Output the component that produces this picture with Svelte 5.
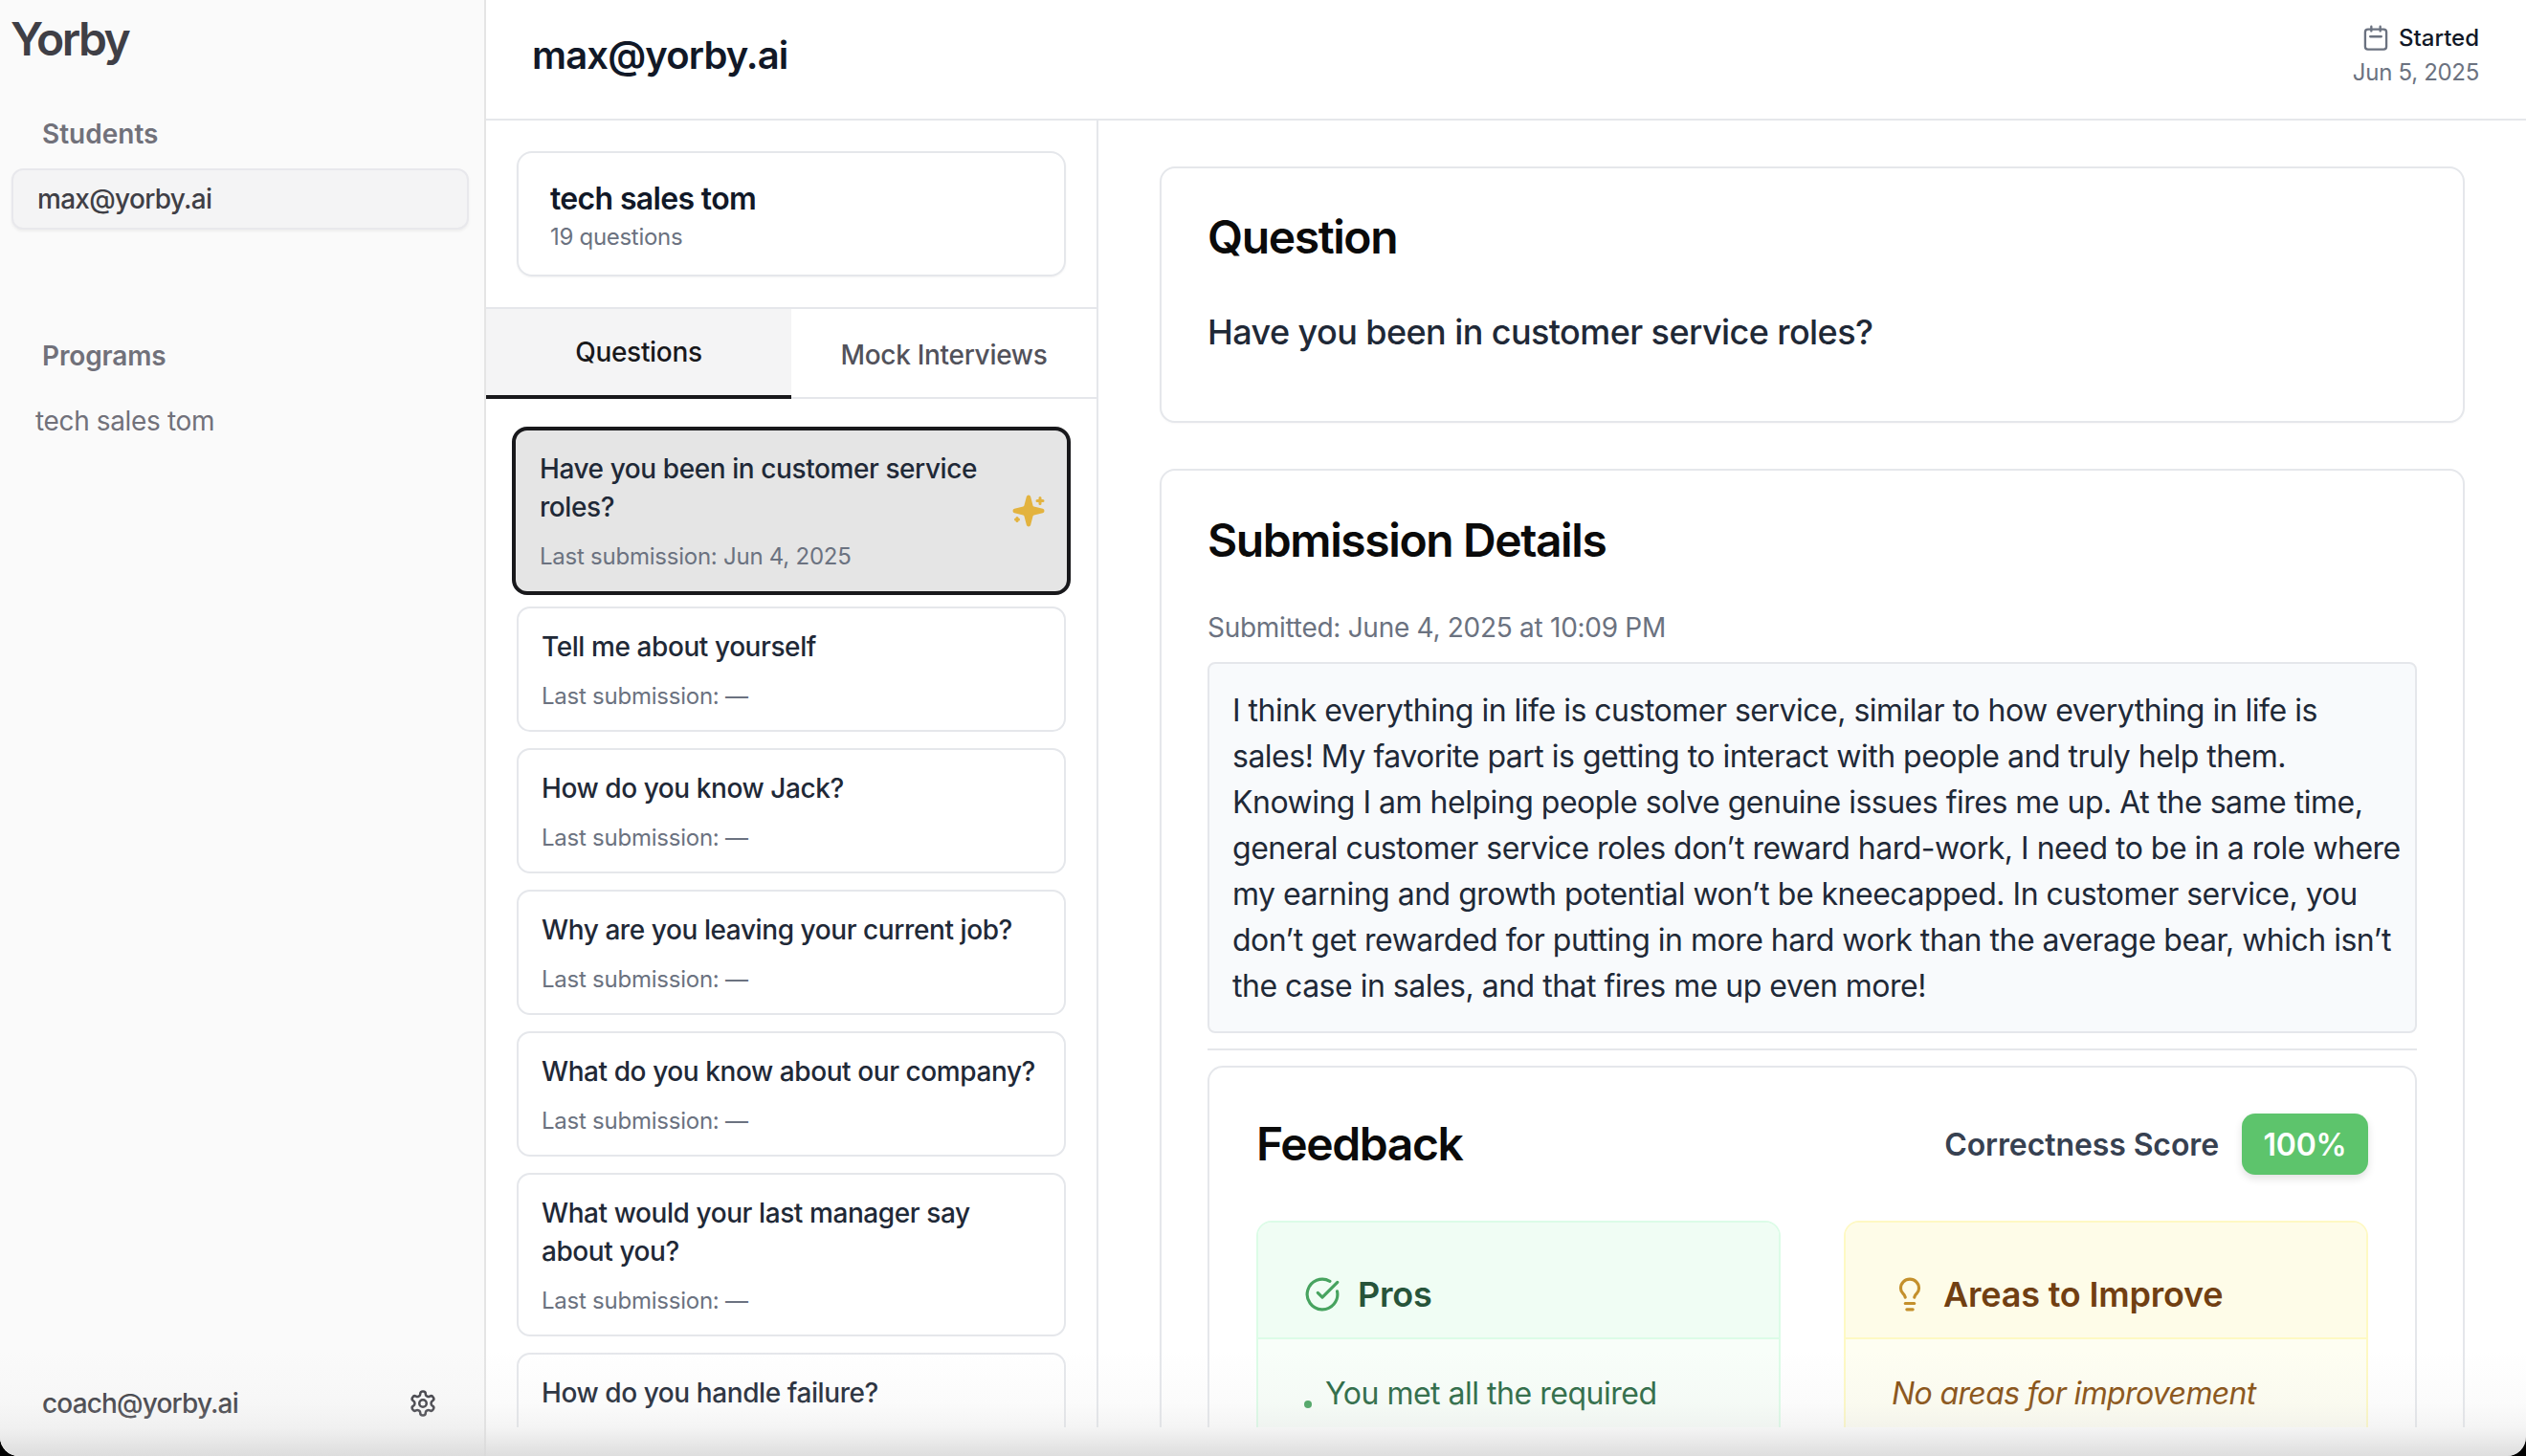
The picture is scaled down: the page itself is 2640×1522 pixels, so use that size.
<script>
  let questions = [
    { text: 'Have you been in customer service roles?', last: 'Jun 4, 2025', active: true },
    { text: 'Tell me about yourself', last: '—' },
    { text: 'How do you know Jack?', last: '—' },
    { text: 'Why are you leaving your current job?', last: '—' },
    { text: 'What do you know about our company?', last: '—' },
    { text: 'What would your last manager say about you?', last: '—' },
    { text: 'How do you handle failure?', last: '—' }
  ];

  // broken by hand so the lines fall where the original's do
  let answerLines = [
    'I think everything in life is customer service, similar to how everything in life is',
    'sales! My favorite part is getting to interact with people and truly help them.',
    'Knowing I am helping people solve genuine issues fires me up. At the same time,',
    'general customer service roles don’t reward hard-work, I need to be in a role where',
    'my earning and growth potential won’t be kneecapped. In customer service, you',
    'don’t get rewarded for putting in more hard work than the average bear, which isn’t',
    'the case in sales, and that fires me up even more!'
  ];
</script>

<div class="app">
  <aside class="sidebar">
    <div class="logo">Yorby</div>
    <h3 class="navTitle">Students</h3>
    <div class="navActive">max@yorby.ai</div>
    <h3 class="navTitle programs">Programs</h3>
    <div class="navItem">tech sales tom</div>
    <div class="account">
      <span>coach@yorby.ai</span>
      <svg class="gear" viewBox="0 0 24 24">
        <path d="M12.22 2h-.44a2 2 0 0 0-2 2v.18a2 2 0 0 1-1 1.73l-.43.25a2 2 0 0 1-2 0l-.15-.08a2 2 0 0 0-2.73.73l-.22.38a2 2 0 0 0 .73 2.73l.15.1a2 2 0 0 1 1 1.72v.51a2 2 0 0 1-1 1.74l-.15.09a2 2 0 0 0-.73 2.73l.22.38a2 2 0 0 0 2.73.73l.15-.08a2 2 0 0 1 2 0l.43.25a2 2 0 0 1 1 1.73V20a2 2 0 0 0 2 2h.44a2 2 0 0 0 2-2v-.18a2 2 0 0 1 1-1.73l.43-.25a2 2 0 0 1 2 0l.15.08a2 2 0 0 0 2.73-.73l.22-.39a2 2 0 0 0-.73-2.73l-.15-.08a2 2 0 0 1-1-1.74v-.5a2 2 0 0 1 1-1.74l.15-.09a2 2 0 0 0 .73-2.73l-.22-.38a2 2 0 0 0-2.73-.73l-.15.08a2 2 0 0 1-2 0l-.43-.25a2 2 0 0 1-1-1.73V4a2 2 0 0 0-2-2z" />
        <circle cx="12" cy="12" r="3" />
      </svg>
    </div>
  </aside>

  <div class="main">
    <header class="header">
      <h1>max@yorby.ai</h1>
      <div class="started">
        <div class="startedLabel">
          <svg class="calendar" viewBox="0 0 24 24">
            <rect x="2.5" y="4" width="19" height="18" rx="2.5" />
            <path d="M8 1.5v4M16 1.5v4M7 10.5h10" />
          </svg>
          Started
        </div>
        <div class="startedDate">Jun 5, 2025</div>
      </div>
    </header>

    <div class="body">
      <section class="listPane">
        <div class="programWrap">
          <div class="programCard">
            <div class="programName">tech sales tom</div>
            <div class="programCount">19 questions</div>
          </div>
        </div>
        <div class="tabs">
          <button class="tab tabActive">Questions</button>
          <button class="tab tabOther">Mock Interviews</button>
        </div>
        <div class="list">
          {#each questions as q}
            <div class={'qCard' + (q.active ? ' qActive' : '')}>
              <div class="qText">
                <p class="qTitle">{q.text}</p>
                <p class="qLast">Last submission: {q.last}</p>
              </div>
              {#if q.active}
                <svg class="sparkle" viewBox="0 0 24 24">
                  <path d="M9.937 15.5A2 2 0 0 0 8.5 14.063l-6.135-1.582a.5.5 0 0 1 0-.962L8.5 9.936A2 2 0 0 0 9.937 8.5l1.582-6.135a.5.5 0 0 1 .963 0L14.063 8.5A2 2 0 0 0 15.5 9.937l6.135 1.581a.5.5 0 0 1 0 .964L15.5 14.063a2 2 0 0 0-1.437 1.437l-1.582 6.135a.5.5 0 0 1-.963 0z" />
                  <path d="M20 3v4M22 5h-4M4 17v2M5 18H3" />
                </svg>
              {/if}
            </div>
          {/each}
        </div>
      </section>

      <section class="detailPane">
        <div class="card questionCard">
          <h2>Question</h2>
          <p class="questionText">Have you been in customer service roles?</p>
        </div>

        <div class="card submissionCard">
          <h2>Submission Details</h2>
          <p class="submitted">Submitted: June 4, 2025 at 10:09 PM</p>
          <div class="answer">
            {#each answerLines as line}
              <div>{line}</div>
            {/each}
          </div>
          <div class="divider"></div>

          <div class="feedback">
            <div class="feedbackHead">
              <h2>Feedback</h2>
              <div class="score">
                <span class="scoreLabel">Correctness Score</span>
                <span class="scoreBadge">100%</span>
              </div>
            </div>
            <div class="columns">
              <div class="col pros">
                <div class="colHead">
                  <svg class="colIcon" viewBox="0 0 24 24">
                    <path d="M21.801 10A10 10 0 1 1 17 3.335" />
                    <path d="m9 11 3 3L22 4" />
                  </svg>
                  <span>Pros</span>
                </div>
                <div class="colBody">
                  <div class="bullet">
                    <i></i>
                    <span>You met all the required elements of the question</span>
                  </div>
                </div>
              </div>
              <div class="col cons">
                <div class="colHead">
                  <svg class="colIcon" viewBox="0 0 24 24">
                    <path d="M15 14c.2-1 .7-1.7 1.5-2.5 1-.9 1.5-2.2 1.5-3.5A6 6 0 0 0 6 8c0 1 .2 2.2 1.5 3.5.7.7 1.3 1.5 1.5 2.5" />
                    <path d="M9 18h6M10 22h4" />
                  </svg>
                  <span>Areas to Improve</span>
                </div>
                <div class="colBody">
                  <em>No areas for improvement identified</em>
                </div>
              </div>
            </div>
          </div>
        </div>
      </section>
    </div>
  </div>

  <div class="bottomFade"></div>
</div>

<style>
  :global(body) {
    margin: 0;
    background: #000;
  }

  * {
    box-sizing: border-box;
  }

  h1,
  h2,
  h3,
  p {
    margin: 0;
  }

  svg {
    fill: none;
    stroke: currentColor;
    stroke-width: 2;
    stroke-linecap: round;
    stroke-linejoin: round;
    flex-shrink: 0;
  }

  .app {
    position: relative;
    display: flex;
    height: 1522px;
    overflow: hidden;
    background: #fff;
    border-radius: 0 0 20px 20px;
    font-family: Inter, 'Liberation Sans', sans-serif;
  }

  .sidebar {
    position: relative;
    display: flex;
    flex-direction: column;
    width: 508px;
    flex-shrink: 0;
    background: #fafafa;
    border-right: 2px solid #e5e5e5;
  }

  .logo {
    margin: 12px 0 0 11px;
    font-size: 48px;
    line-height: 58px;
    font-weight: 600;
    letter-spacing: -2.5px;
    color: #3f3f46;
  }

  .navTitle {
    margin: 50px 0 0 44px;
    font-size: 28px;
    line-height: 40px;
    font-weight: 600;
    color: #71717a;
  }

  .programs {
    margin-top: 112px;
    letter-spacing: -0.15px;
  }

  .navActive {
    margin: 16px 16px 0 12px;
    height: 64px;
    padding-left: 25px;
    display: flex;
    align-items: center;
    font-size: 28px;
    font-weight: 500;
    letter-spacing: -0.7px;
    color: #3f3f46;
    background: #f4f4f5;
    border: 2px solid #e8e8ec;
    border-radius: 12px;
    box-shadow: 0 2px 3px rgba(0, 0, 0, 0.05);
  }

  .navItem {
    margin: 28px 0 0 37px;
    font-size: 28px;
    line-height: 40px;
    letter-spacing: -0.36px;
    color: #71717a;
  }

  .account {
    margin-top: auto;
    display: flex;
    align-items: center;
    justify-content: space-between;
    padding: 0 49px 35px 44px;
    font-size: 28px;
    line-height: 40px;
    font-weight: 500;
    letter-spacing: -0.84px;
    color: #3f3f46;
  }

  .gear {
    width: 30px;
    height: 30px;
  }

  .main {
    flex: 1;
    display: flex;
    flex-direction: column;
    min-width: 0;
  }

  .header {
    height: 126px;
    flex-shrink: 0;
    display: flex;
    align-items: center;
    justify-content: space-between;
    padding: 0 49px 0 48px;
    border-bottom: 2px solid #e5e7eb;
  }

  h1 {
    margin-top: -10px;
    font-size: 40px;
    font-weight: 600;
    letter-spacing: -0.85px;
    color: #111827;
  }

  .started {
    text-align: right;
    margin-top: -8px;
  }

  .startedLabel {
    display: flex;
    align-items: center;
    justify-content: flex-end;
    gap: 10px;
    font-size: 24px;
    line-height: 30px;
    font-weight: 500;
    color: #111827;
  }

  .calendar {
    width: 28px;
    height: 28px;
    color: #6b7280;
  }

  .startedDate {
    margin-top: 6px;
    font-size: 24px;
    line-height: 30px;
    letter-spacing: -0.3px;
    color: #6b7280;
  }

  .body {
    flex: none;
    display: flex;
    height: 1366px;
  }

  .listPane {
    width: 640px;
    flex-shrink: 0;
    display: flex;
    flex-direction: column;
    border-right: 2px solid #e5e7eb;
    overflow: hidden;
  }

  .programWrap {
    padding: 32px 32px 32px;
    border-bottom: 2px solid #e5e7eb;
  }

  .programCard {
    height: 131px;
    padding: 28px 33px 0;
    border: 2px solid #e5e7eb;
    border-radius: 16px;
    box-shadow: 0 1px 2px rgba(0, 0, 0, 0.05);
  }

  .programName {
    font-size: 32px;
    line-height: 40px;
    font-weight: 600;
    letter-spacing: -0.66px;
    color: #111827;
  }

  .programCount {
    margin-top: 4px;
    font-size: 24px;
    line-height: 32px;
    letter-spacing: -0.3px;
    color: #6b7280;
  }

  .tabs {
    display: flex;
    height: 94px;
    flex-shrink: 0;
    border-bottom: 2px solid #e5e7eb;
  }

  .tab {
    flex: 1;
    border: none;
    background: transparent;
    padding: 0;
    font-family: inherit;
    font-size: 28px;
    font-weight: 500;
    letter-spacing: -0.3px;
    color: #52525b;
  }

  .tabOther {
    padding-top: 3px;
  }

  .tabActive {
    margin-bottom: -2px;
    background: #f4f4f5;
    border-bottom: 4px solid #18181b;
    color: #18181b;
  }

  .list {
    flex: 1;
    display: flex;
    flex-direction: column;
    gap: 17px;
    padding: 29px 32px 0;
    overflow: hidden;
  }

  .qCard {
    flex-shrink: 0;
    display: flex;
    align-items: center;
    justify-content: space-between;
    padding: 20px 22px 18px 24px;
    border: 2px solid #e5e7eb;
    border-radius: 14px;
    background: #fff;
  }

  .qActive {
    margin: 0 -5px -5px;
    padding: 20px 24px 19px 25px;
    border: 4px solid #18181b;
    border-radius: 16px;
    background: #e5e5e5;
  }

  .qTitle {
    font-size: 28px;
    line-height: 40px;
    font-weight: 500;
    letter-spacing: -0.42px;
    color: #1f2937;
  }

  .qLast {
    margin-top: 15px;
    font-size: 24px;
    line-height: 34px;
    letter-spacing: -0.24px;
    color: #6b7280;
  }

  .sparkle {
    width: 36px;
    height: 36px;
    margin: -2px -2px 0 0;
    color: #e3b33f;
    fill: currentColor;
  }

  .detailPane {
    flex: 1;
    min-width: 0;
    padding: 48px 64px 0 64px;
    overflow: hidden;
  }

  .card {
    border: 2px solid #e5e7eb;
    border-radius: 16px;
    background: #fff;
    box-shadow: 0 1px 2px rgba(0, 0, 0, 0.03);
  }

  .card h2,
  .feedback h2 {
    font-size: 48px;
    line-height: 60px;
    font-weight: 600;
    letter-spacing: -1.4px;
    color: #0a0a0a;
  }

  .questionCard {
    height: 268px;
    padding: 42px 48px 0;
  }

  .questionText {
    margin-top: 47px;
    font-size: 36px;
    line-height: 44px;
    font-weight: 500;
    letter-spacing: -0.58px;
    color: #1f2937;
  }

  .submissionCard {
    margin-top: 48px;
    padding: 43px 48px 0;
  }

  .submitted {
    margin-top: 41px;
    font-size: 28px;
    line-height: 40px;
    letter-spacing: -0.28px;
    color: #6b7280;
  }

  .answer {
    margin-top: 16px;
    height: 388px;
    padding: 25px 10px 0 24px;
    font-size: 32px;
    line-height: 48px;
    letter-spacing: -0.5px;
    white-space: nowrap;
    color: #1f2937;
    background: #f8fafc;
    border: 2px solid #e5e7eb;
    border-radius: 8px;
  }

  .divider {
    height: 2px;
    margin-top: 16px;
    background: #e5e7eb;
  }

  .feedback {
    margin-top: 16px;
    padding: 48px 49px 0;
    border: 2px solid #e5e7eb;
    border-radius: 16px;
  }

  .feedbackHead {
    display: flex;
    align-items: center;
    justify-content: space-between;
  }

  .score {
    display: flex;
    align-items: center;
    gap: 24px;
  }

  .scoreLabel {
    font-size: 32px;
    font-weight: 600;
    letter-spacing: -0.1px;
    color: #374151;
  }

  .scoreBadge {
    display: flex;
    align-items: center;
    justify-content: center;
    width: 132px;
    height: 64px;
    border-radius: 14px;
    background: #5dc46c;
    font-size: 32px;
    font-weight: 600;
    letter-spacing: -0.2px;
    color: #fff;
    box-shadow: 0 4px 8px rgba(0, 0, 0, 0.12);
  }

  .columns {
    display: grid;
    grid-template-columns: 1fr 1fr;
    gap: 66px;
    margin-top: 48px;
  }

  .col {
    border: 2px solid;
    border-radius: 16px;
    overflow: hidden;
  }

  .colHead {
    display: flex;
    align-items: center;
    height: 122px;
    padding: 30px 0 0 48px;
    gap: 18px;
    font-size: 36px;
    font-weight: 600;
    letter-spacing: -0.2px;
    border-bottom: 2px solid;
  }

  .colIcon {
    width: 38px;
    height: 38px;
  }

  .colBody {
    padding: 32px 48px 40px;
    font-size: 32px;
    line-height: 50px;
    letter-spacing: -0.49px;
  }

  .pros {
    border-color: #dcfce7;
  }

  .pros .colHead {
    background: #f0fdf4;
    border-color: #dcfce7;
    color: #27543a;
  }

  .pros .colIcon {
    color: #47a35f;
  }

  .pros .colBody {
    background: #f8fef9;
    color: #276741;
  }

  .bullet {
    display: flex;
    gap: 14px;
  }

  .bullet i {
    width: 8px;
    height: 8px;
    margin-top: 32px;
    border-radius: 50%;
    background: #47a35f;
    flex-shrink: 0;
  }

  .cons {
    border-color: #fef9c3;
  }

  .cons .colHead {
    background: #fefce8;
    border-color: #fef9c3;
    color: #713f12;
    gap: 16px;
  }

  .cons .colIcon {
    color: #c4902c;
  }

  .cons .colBody {
    background: #fefef2;
    color: #854d0e;
    letter-spacing: -0.63px;
  }

  .bottomFade {
    position: absolute;
    left: 0;
    right: 0;
    bottom: 0;
    height: 110px;
    pointer-events: none;
    background: linear-gradient(to bottom, rgba(216, 216, 216, 0) 0%, rgba(216, 216, 216, 0.1) 50%, rgba(216, 216, 216, 0.28) 73%, rgba(216, 216, 216, 0.85) 100%);
  }
</style>
